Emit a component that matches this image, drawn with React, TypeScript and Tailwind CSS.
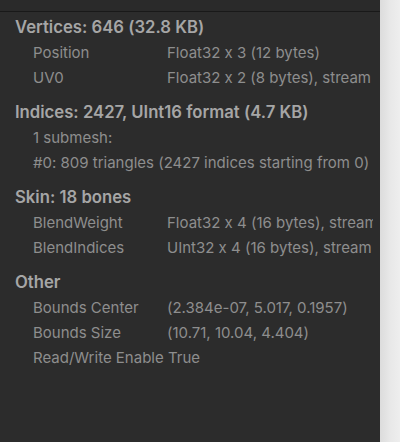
const sections = [
  {
    title: "Vertices: 646 (32.8 KB)",
    rows: [
      ["Position", "Float32 x 3 (12 bytes)"],
      ["UV0", "Float32 x 2 (8 bytes), stream 0"],
    ],
  },
  {
    title: "Indices: 2427, UInt16 format (4.7 KB)",
    rows: [["1 submesh:"], ["#0: 809 triangles (2427 indices starting from 0)"]],
  },
  {
    title: "Skin: 18 bones",
    rows: [
      ["BlendWeight", "Float32 x 4 (16 bytes), stream 1"],
      ["BlendIndices", "UInt32 x 4 (16 bytes), stream 1"],
    ],
  },
  {
    title: "Other",
    rows: [
      ["Bounds Center", "(2.384e-07, 5.017, 0.1957)"],
      ["Bounds Size", "(10.71, 10.04, 4.404)"],
      ["Read/Write Enable True"],
    ],
  },
];

export default function App() {
  return (
    <div
      className="flex w-[400px] h-[442px] overflow-hidden [font-feature-settings:'calt'_0]"
      style={{ fontFamily: "Inter, 'Noto Sans', sans-serif" }}
    >
      <div className="w-[380px] h-full flex flex-col bg-[#2c2c2c]">
        <div className="h-[12px] bg-[#2a2a2a] border-b border-[#191919] shrink-0" />
        <div className="flex flex-col gap-[10px] pt-[3px] pl-[15px] pr-[7px] overflow-hidden">
          {sections.map((s) => (
            <div key={s.title}>
              <div className="h-[25px] leading-[25px] text-[16.7px] font-semibold text-[#a6a6a6] whitespace-nowrap">
                {s.title}
              </div>
              {s.rows.map((r) => (
                <div
                  key={r[0]}
                  className="flex h-[25px] leading-[25px] pl-[18px] text-[15px] text-[#8e8e8e] whitespace-nowrap overflow-hidden"
                >
                  {r.length === 2 ? (
                    <>
                      <span className="w-[134px] shrink-0">{r[0]}</span>
                      <span>{r[1]}</span>
                    </>
                  ) : (
                    <span>{r[0]}</span>
                  )}
                </div>
              ))}
            </div>
          ))}
        </div>
      </div>
      <div className="flex-1 h-full bg-gradient-to-r from-[#dcdcdc] via-[#e8e8e8] to-[#eeeeee]" />
    </div>
  );
}
